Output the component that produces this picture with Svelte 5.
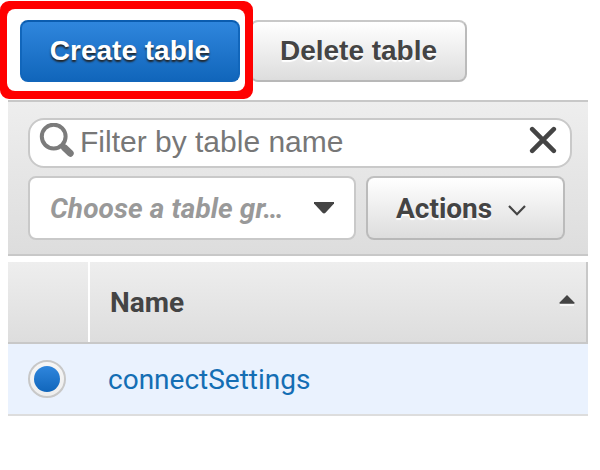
<script>
  const tables = ['connectSettings'];
  let selected = $state('connectSettings');
</script>

<main>
  <div class="toolbar">
    <div class="slot">
      <button class="btn primary">Create table</button>
      <span class="highlight"></span>
    </div>
    <button class="btn delete">Delete table</button>
  </div>

  <section class="filters">
    <div class="search">
      <svg class="lens" width="36" height="36" viewBox="0 0 36 36">
        <circle cx="15.7" cy="13.6" r="11.9" fill="none" stroke="#7b7b7b" stroke-width="4" />
        <path d="M23.5 21.5 L27 25" stroke="#7b7b7b" stroke-width="4.8" />
        <path d="M26.5 24.8 L32.3 30.3" stroke="#7b7b7b" stroke-width="6.8" stroke-linecap="round" />
      </svg>
      <span class="placeholder">Filter by table name</span>
      <svg class="clear" width="28" height="28" viewBox="0 0 28 28">
        <path d="M3.2 3.2 L24.8 24.8 M24.8 3.2 L3.2 24.8" stroke="#444" stroke-width="4.6" stroke-linecap="round" />
      </svg>
    </div>
    <div class="row">
      <div class="select">
        <span class="choice">Choose a table gr…</span>
        <svg width="20" height="12" viewBox="0 0 20 12"><path d="M0 0 H20 V1.5 L11.5 10.8 Q10 12 8.5 10.8 L0 1.5Z" fill="#444" /></svg>
      </div>
      <button class="btn actions">
        <span>Actions</span>
        <svg width="18" height="11" viewBox="0 0 18 11"><path d="M1 1 L9 9.2 L17 1" fill="none" stroke="#444" stroke-width="2.2" /></svg>
      </button>
    </div>
  </section>

  <section class="table">
    <div class="head">
      <div class="pick"></div>
      <div class="name">
        <span>Name</span>
        <svg width="16" height="11" viewBox="0 0 16 11"><path d="M1 10 H15" stroke="#fff" stroke-width="1.4" /><path d="M8 0 L15.4 7.5 V8.7 H.6 V7.5Z" fill="#444" /></svg>
      </div>
    </div>
    {#each tables as table}
      <div class="item">
        <button class="radio" class:on={selected === table} aria-label={table} onclick={() => (selected = table)}></button>
        <span class="link">{table}</span>
      </div>
    {/each}
  </section>
</main>

<style>
  :global(body) {
    background: #fff;
  }
  main {
    width: 580px;
    padding: 20px 12px 0 8px;
    font-family: Roboto, sans-serif;
    color: #444;
  }
  main * {
    box-sizing: border-box;
  }
  svg {
    display: block;
    flex: none;
  }
  .toolbar {
    display: flex;
    height: 80px;
    padding-left: 12px;
    gap: 10px;
  }
  .slot {
    position: relative;
    width: 220px;
    height: 62px;
  }
  .highlight {
    position: absolute;
    z-index: 1;
    left: -20px;
    top: -19px;
    width: 253px;
    height: 98px;
    border: 8px solid #f00;
    border-left-width: 7px;
    border-radius: 9px;
    pointer-events: none;
  }
  .highlight::before {
    content: '';
    position: absolute;
    inset: 0;
    border-radius: 8px;
    box-shadow: 0 0 0 4px #f00;
  }
  .btn {
    height: 62px;
    margin: 0;
    padding: 0;
    border: 2px solid;
    border-color: #c8c8c8 #bbb #b8b8b8 #c8c8c8;
    border-radius: 8px;
    background: linear-gradient(#fff, #ddd);
    color: #444;
    font: bold 28px 'Liberation Sans', sans-serif;
    text-shadow: 0 2px 1px #fff;
  }
  .primary {
    width: 220px;
    border-color: #0a5caf #1166bb #1166bb;
    background: linear-gradient(#2f86dd, #1166bb);
    color: #fff;
    text-shadow: 0 2px 2px #222;
  }
  .delete {
    width: 217px;
  }
  .filters {
    height: 156px;
    padding: 16px 16px 0 20px;
    border: solid #c8c8c8;
    border-width: 2px 0;
    background: linear-gradient(#eee, #ddd);
  }
  .search {
    display: flex;
    align-items: center;
    height: 50px;
    padding: 0 13px 0 8px;
    border: 2px solid #c9c9c9;
    border-radius: 16px;
    background: #fff;
  }
  .lens {
    margin-top: -4px;
  }
  .placeholder {
    flex: 1;
    margin: -2px 0 0 6px;
    font: 30px/34px 'Liberation Sans', sans-serif;
    color: #777;
  }
  .clear {
    margin-top: -6px;
  }
  .row {
    display: flex;
    gap: 10px;
    margin-top: 8px;
  }
  .select {
    display: flex;
    align-items: center;
    justify-content: space-between;
    width: 328px;
    height: 64px;
    padding: 0 20px;
    border: 2px solid #c9c9c9;
    border-radius: 8px;
    background: #fff;
    color: #999;
    font: italic bold 28px Roboto, sans-serif;
  }
  .choice {
    letter-spacing: 0.1px;
  }
  .actions {
    display: flex;
    align-items: center;
    width: 199px;
    height: 64px;
    padding: 0 0 0 28px;
    gap: 16px;
    border-color: #c0c0c0 #bbb #b8b8b8;
    font-family: Roboto, sans-serif;
  }
  .actions svg {
    margin-top: 4px;
  }
  .table {
    margin-top: 6px;
  }
  .head {
    display: flex;
    height: 82px;
    border-bottom: 2px solid #c8c8c8;
    background: linear-gradient(#eee, #ddd);
  }
  .pick {
    width: 82px;
    border-right: 2px solid #fff;
  }
  .name {
    display: flex;
    flex: 1;
    align-items: center;
    justify-content: space-between;
    padding: 0 11px 0 20px;
    border-right: 2px solid #c8c8c8;
    font-size: 28px;
    font-weight: bold;
  }
  .name svg {
    margin-top: -3px;
  }
  .item {
    display: flex;
    align-items: center;
    height: 72px;
    padding-left: 20px;
    border-bottom: 2px solid #ddd;
    background: #eaf2fe;
    font-size: 28px;
  }
  .radio {
    display: grid;
    place-items: center;
    width: 38px;
    height: 38px;
    padding: 0;
    border: 2px solid #c8c8c8;
    border-radius: 50%;
    background: linear-gradient(#f6f6f6, #eee);
  }
  .on::after {
    content: '';
    width: 26px;
    height: 26px;
    border-radius: 50%;
    background: linear-gradient(#2f86dd, #1166bb);
  }
  .link {
    margin-left: 42px;
    color: #146eb4;
  }
</style>
